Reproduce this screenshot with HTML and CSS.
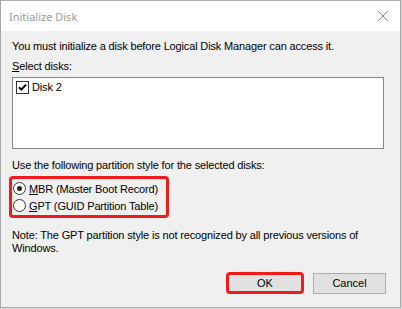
FILE: index.html
```html
<!DOCTYPE html>
<html>
<head>
<meta charset="utf-8">
<link rel="stylesheet" href="styles.css">
</head>
<body>
<div class="dialog">
  <div class="titlebar">
    <span class="title">Initialize Disk</span>
    <svg class="close" width="12" height="12" viewBox="0 0 12 12"><path d="M1 1L11 11M11 1L1 11" stroke="#8a8a8a" stroke-width="1" fill="none"/></svg>
  </div>
  <div class="content">
    <p class="line intro">You must initialize a disk before Logical Disk Manager can access it.</p>
    <p class="line label"><u>S</u>elect disks:</p>
    <div class="listbox">
      <div class="item">
        <span class="check"><svg width="11" height="11" viewBox="0 0 11 11"><path d="M2 5.2L4.3 7.6L9 2.6" stroke="#000" stroke-width="2" fill="none"/></svg></span>
        <span>Disk 2</span>
      </div>
    </div>
    <p class="line label2">Use the following partition style for the selected disks:</p>
    <div class="highlight radios">
      <div class="radio-row"><span class="radio on"></span><span><u>M</u>BR (Master Boot Record)</span></div>
      <div class="radio-row"><span class="radio"></span><span><u>G</u>PT (GUID Partition Table)</span></div>
    </div>
    <p class="line note">Note: The GPT partition style is not recognized by all previous versions of Windows.</p>
    <div class="buttons">
      <button class="btn ok">OK</button>
      <button class="btn">Cancel</button>
    </div>
  </div>
</div>
</body>
</html>
```
FILE: styles.css
```css
html, body {
  margin: 0;
  padding: 0;
  background: #d9d9d9;
}
body {
  width: 402px;
  height: 309px;
  overflow: hidden;
}
.dialog {
  width: 399px;
  height: 306px;
  border: 1px solid #a9a9a9;
  background: #f0f0f0;
  font-family: "Liberation Sans", Arial, sans-serif;
  font-size: 11px;
  letter-spacing: -0.15px;
  color: #000;
}
.titlebar {
  height: 30px;
  background: #fff;
  display: flex;
  align-items: center;
  justify-content: space-between;
  padding: 0 11px 0 8px;
}
.title {
  font-family: "Noto Sans", "Open Sans", sans-serif;
  font-size: 11px;
  letter-spacing: 0;
  color: #9a9a9a;
  margin-top: 1px;
}
.close {
  display: block;
}
.content {
  padding: 0 0 0 11px;
}
.line {
  margin: 0;
  line-height: 13px;
  white-space: nowrap;
}
.intro {
  padding-top: 9px;
}
.label {
  margin-top: 7px;
}
.listbox {
  margin-top: 4px;
  width: 370px;
  height: 70px;
  border: 1px solid #828790;
  background: #fff;
}
.item {
  display: flex;
  align-items: center;
  gap: 3px;
  padding: 3px 0 0 3px;
  line-height: 13px;
}
.check {
  width: 11px;
  height: 11px;
  border: 1px solid #333;
  background: #fff;
  display: flex;
}
.label2 {
  margin-top: 10px;
}
.highlight {
  border: 3px solid #f01c1c;
  border-radius: 4px;
}
.radios {
  margin-top: 4px;
  margin-left: -3px;
  width: 153px;
  padding: 1px 0 1px 1px;
}
.radio-row {
  display: flex;
  align-items: center;
  gap: 3px;
  height: 17px;
}
.radio {
  width: 11px;
  height: 11px;
  border: 1px solid #333;
  border-radius: 50%;
  background: #fff;
  position: relative;
}
.radio.on::after {
  content: "";
  position: absolute;
  left: 3px;
  top: 3px;
  width: 5px;
  height: 5px;
  border-radius: 50%;
  background: #222;
}
.note {
  margin-top: 11px;
  white-space: normal;
  width: 370px;
}
.buttons {
  display: flex;
  justify-content: flex-end;
  align-items: center;
  gap: 9px;
  margin-top: 17px;
  padding-right: 14px;
}
.btn {
  font-family: "Liberation Sans", Arial, sans-serif;
  font-size: 11px;
  color: #000;
  background: #e1e1e1;
  border: 1px solid #adadad;
  width: 73px;
  height: 21px;
  padding: 0;
  margin: 0;
}
.btn.ok {
  width: 78px;
  height: 22px;
  border: 3px solid #f01c1c;
  border-radius: 4px;
}
```
